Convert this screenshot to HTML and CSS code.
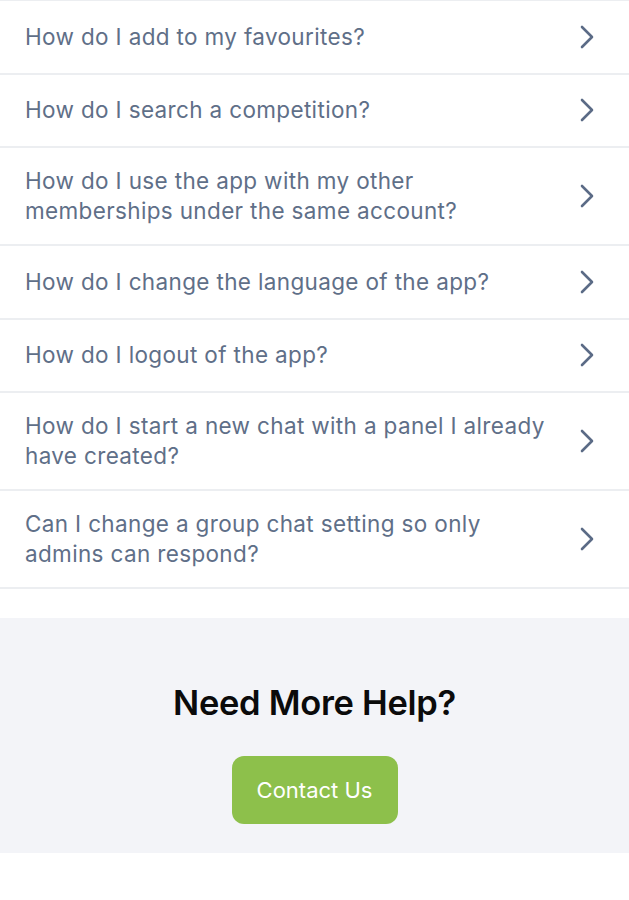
FILE: index.html
```html
<!DOCTYPE html>
<html lang="en">
<head>
  <meta charset="UTF-8" />
  <title>Help - FAQ</title>
  <link rel="stylesheet" href="styles.css">
</head>
<body>
  <ul class="faq-list">
    <li class="faq-item">
      <span class="faq-question">How do I add to my favourites?</span>
      <svg class="chevron" viewBox="0 0 14 24"><path d="M2 2 L12 12 L2 22" /></svg>
    </li>
    <li class="faq-item">
      <span class="faq-question">How do I search a competition?</span>
      <svg class="chevron" viewBox="0 0 14 24"><path d="M2 2 L12 12 L2 22" /></svg>
    </li>
    <li class="faq-item">
      <span class="faq-question">How do I use the app with my other memberships under the same account?</span>
      <svg class="chevron" viewBox="0 0 14 24"><path d="M2 2 L12 12 L2 22" /></svg>
    </li>
    <li class="faq-item">
      <span class="faq-question">How do I change the language of the app?</span>
      <svg class="chevron" viewBox="0 0 14 24"><path d="M2 2 L12 12 L2 22" /></svg>
    </li>
    <li class="faq-item">
      <span class="faq-question">How do I logout of the app?</span>
      <svg class="chevron" viewBox="0 0 14 24"><path d="M2 2 L12 12 L2 22" /></svg>
    </li>
    <li class="faq-item">
      <span class="faq-question">How do I start a new chat with a panel I already have created?</span>
      <svg class="chevron" viewBox="0 0 14 24"><path d="M2 2 L12 12 L2 22" /></svg>
    </li>
    <li class="faq-item">
      <span class="faq-question">Can I change a group chat setting so only admins can respond?</span>
      <svg class="chevron" viewBox="0 0 14 24"><path d="M2 2 L12 12 L2 22" /></svg>
    </li>
  </ul>

  <div class="help-box">
    <h2>Need More Help?</h2>
    <button class="contact-btn">Contact Us</button>
  </div>
</body>
</html>
```

FILE: styles.css
```css
body {
  margin: 0;
  font-family: Inter, 'Noto Sans', sans-serif;
  background-color: #fff;
  color: #5f6f88;
}
.faq-list {
  list-style: none;
  margin: 0 0 29px;
  padding: 0;
  border-top: 1px solid #eceef1;
}
.faq-item {
  box-sizing: border-box;
  display: flex;
  align-items: center;
  justify-content: space-between;
  min-height: 73.5px;
  padding: 18px 35px 18px 25px;
  border-bottom: 2px solid #eceef1;
}
.faq-question {
  font-size: 22.5px;
  line-height: 30px;
  max-width: 522px;
  letter-spacing: 0.35px;
}
.chevron {
  width: 14px;
  height: 24px;
  flex-shrink: 0;
}
.chevron path {
  fill: none;
  stroke: #5b6b86;
  stroke-width: 2.6;
  stroke-linecap: round;
  stroke-linejoin: round;
}
.help-box {
  background-color: #f3f4f8;
  height: 235px;
  text-align: center;
  padding-top: 65px;
  box-sizing: border-box;
}
.help-box h2 {
  margin: 0 0 33px;
  font-size: 34.5px;
  line-height: 40px;
  font-weight: 600;
  color: #0b0b0b;
  letter-spacing: -0.3px;
}
.contact-btn {
  background-color: #8dc04b;
  color: #fff;
  font-family: Inter, sans-serif;
  font-size: 22px;
  border: none;
  border-radius: 12px;
  width: 166px;
  height: 68px;
  cursor: pointer;
}
```
